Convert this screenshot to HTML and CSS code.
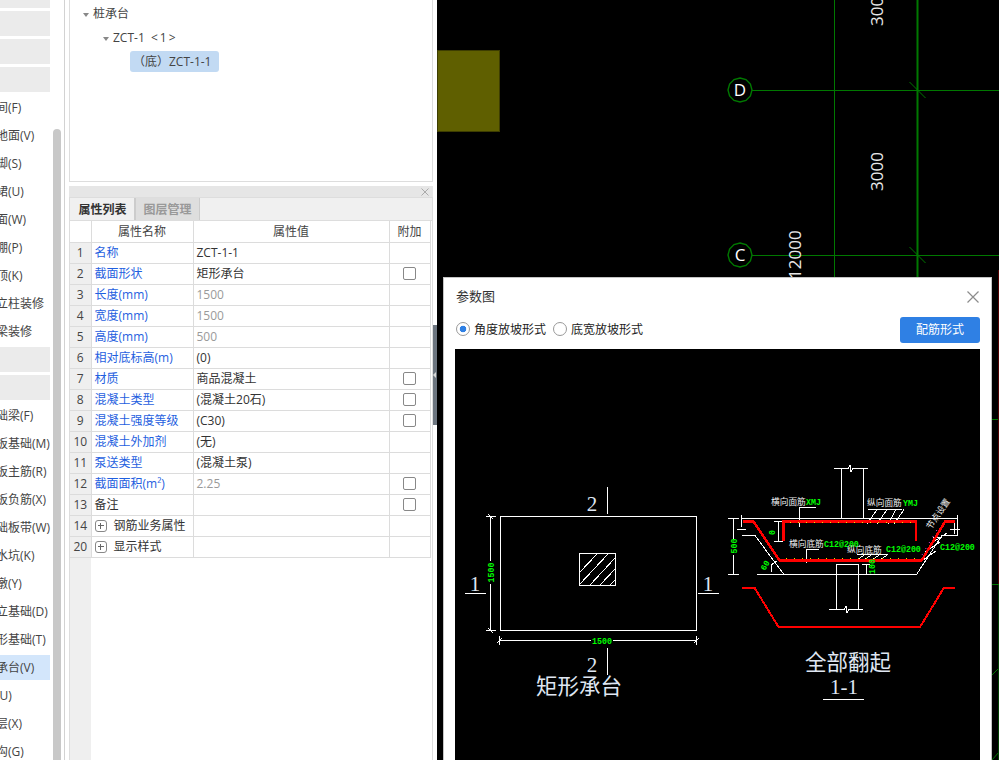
FILE: index.html
```html
<!DOCTYPE html>
<html lang="zh-CN">
<head>
<meta charset="utf-8">
<title>参数图</title>
<link rel="stylesheet" href="styles.css">
</head>
<body>
<div class="app">
  <aside class="sidebar">
    <ul class="nav">
      <li class="nav-head"></li><li class="nav-head"></li><li class="nav-head"></li><li class="nav-head"></li>
      <li class="nav-item"><span>房间(F)</span></li>
      <li class="nav-item"><span>楼地面(V)</span></li>
      <li class="nav-item"><span>踢脚(S)</span></li>
      <li class="nav-item"><span>墙裙(U)</span></li>
      <li class="nav-item"><span>墙面(W)</span></li>
      <li class="nav-item"><span>天棚(P)</span></li>
      <li class="nav-item"><span>吊顶(K)</span></li>
      <li class="nav-item"><span>独立柱装修</span></li>
      <li class="nav-item"><span>单梁装修</span></li>
      <li class="nav-head"></li><li class="nav-head"></li>
      <li class="nav-item"><span>基础梁(F)</span></li>
      <li class="nav-item"><span>筏板基础(M)</span></li>
      <li class="nav-item"><span>筏板主筋(R)</span></li>
      <li class="nav-item"><span>筏板负筋(X)</span></li>
      <li class="nav-item"><span>基础板带(W)</span></li>
      <li class="nav-item"><span>集水坑(K)</span></li>
      <li class="nav-item"><span>柱墩(Y)</span></li>
      <li class="nav-item"><span>独立基础(D)</span></li>
      <li class="nav-item"><span>条形基础(T)</span></li>
      <li class="nav-item nav-active"><span>桩承台(V)</span></li>
      <li class="nav-item"><span>桩(U)</span></li>
      <li class="nav-item"><span>垫层(X)</span></li>
      <li class="nav-item"><span>地沟(G)</span></li>
    </ul>
    <div class="scrollbar"></div>
  </aside>

  <main class="panels">
    <section class="tree">
      <div class="tree-row tree-l1"><i class="caret"></i>桩承台</div>
      <div class="tree-row tree-l2"><i class="caret"></i>ZCT-1&nbsp;&nbsp;&lt;&thinsp;1&thinsp;&gt;</div>
      <div class="tree-row tree-l3"><span class="tree-pill">（底）ZCT-1-1</span></div>
    </section>
    <section class="props">
      <div class="props-bar"><svg class="props-x" width="8" height="8" viewBox="0 0 8 8"><path d="M.5.5l7 7M7.5.5l-7 7"/></svg></div>
      <div class="tabs">
        <div class="tab tab-on">属性列表</div>
        <div class="tab">图层管理</div>
      </div>
      <div class="table-wrap">
        <table class="grid">
          <colgroup><col class="c-n"><col class="c-k"><col class="c-v"><col class="c-a"></colgroup>
          <thead><tr><th class="idx-head"></th><th>属性名称</th><th>属性值</th><th>附加</th></tr></thead>
          <tbody>
            <tr><td class="idx">1</td><td class="key">名称</td><td>ZCT-1-1</td><td></td></tr>
            <tr><td class="idx">2</td><td class="key">截面形状</td><td>矩形承台</td><td class="chk"><i></i></td></tr>
            <tr><td class="idx">3</td><td class="key">长度(mm)</td><td class="mut">1500</td><td></td></tr>
            <tr><td class="idx">4</td><td class="key">宽度(mm)</td><td class="mut">1500</td><td></td></tr>
            <tr><td class="idx">5</td><td class="key">高度(mm)</td><td class="mut">500</td><td></td></tr>
            <tr><td class="idx">6</td><td class="key">相对底标高(m)</td><td>(0)</td><td></td></tr>
            <tr><td class="idx">7</td><td class="key">材质</td><td>商品混凝土</td><td class="chk"><i></i></td></tr>
            <tr><td class="idx">8</td><td class="key">混凝土类型</td><td>(混凝土20石)</td><td class="chk"><i></i></td></tr>
            <tr><td class="idx">9</td><td class="key">混凝土强度等级</td><td>(C30)</td><td class="chk"><i></i></td></tr>
            <tr><td class="idx">10</td><td class="key">混凝土外加剂</td><td>(无)</td><td></td></tr>
            <tr><td class="idx">11</td><td class="key">泵送类型</td><td>(混凝土泵)</td><td></td></tr>
            <tr><td class="idx">12</td><td class="key">截面面积(m²)</td><td class="mut">2.25</td><td class="chk"><i></i></td></tr>
            <tr><td class="idx">13</td><td>备注</td><td></td><td class="chk"><i></i></td></tr>
            <tr><td class="idx">14</td><td><b class="plus"></b>钢筋业务属性</td><td></td><td></td></tr>
            <tr><td class="idx">20</td><td><b class="plus"></b>显示样式</td><td></td><td></td></tr>
          </tbody>
        </table>
      </div>
    </section>
  </main>

  <div class="splitter"><div class="split-handle"><i></i></div></div>

  <div class="canvas">
    <svg class="cad" width="562" height="760" viewBox="437 0 562 760">
      <rect class="cad-block" x="437.5" y="50.5" width="62" height="81"/>
      <path class="cad-g" d="M834.5 0V277M752 90.5H999M752 255.5H999"/>
      <path class="cad-g2" d="M917.5 0V277"/>
      <path class="cad-g" d="M909.5 82l16 16M909.500 247l16 16"/>
      <polygon class="cad-ring" transform="translate(740 90)" points="0,-12 6,-10.400 10.400,-6 12,0 10.400,6 6,10.400 0,12 -6,10.400 -10.400,6 -12,0 -10.400,-6 -6,-10.400"/>
      <polygon class="cad-ring" transform="translate(740 255)" points="0,-12 6,-10.400 10.400,-6 12,0 10.400,6 6,10.400 0,12 -6,10.400 -10.400,6 -12,0 -10.400,-6 -6,-10.400"/>
      <text class="cad-axis" x="740" y="96" text-anchor="middle">D</text>
      <text class="cad-axis" x="740" y="261" text-anchor="middle">C</text>
      <text class="cad-num" transform="translate(883 191) rotate(-90)">3000</text>
      <text class="cad-num" transform="translate(883 26) rotate(-90)">3000</text>
      <text class="cad-num" transform="translate(801 279) rotate(-90)">12000</text>
      <path class="cad-g" d="M992 419.500H999M992 584.500H999M992 675l7-7M992 760l7-8"/>
      <path class="cad-dr" d="M998.500 270V584"/>
      <path class="cad-dg" d="M998.500 585V760"/>
    </svg>

    <div class="dialog">
      <header class="dlg-head">
        <span class="dlg-title">参数图</span>
        <svg class="dlg-x" width="12" height="12" viewBox="0 0 12 12"><path d="M.5.5l11 11M11.500.5l-11 11"/></svg>
      </header>
      <div class="dlg-opts">
        <label class="radio radio-on"><i></i>角度放坡形式</label>
        <label class="radio"><i></i>底宽放坡形式</label>
        <button class="btn" type="button">配筋形式</button>
      </div>
      <div class="dlg-figure">
        <svg class="fig" width="525" height="411" viewBox="455 349 525 411">
          <!-- plan -->
          <path class="w" d="M500.500 516.500H696.500V630.500H500.500z"/>
          <path class="w" d="M579.500 553.500H615.500V585.500H579.500z"/>
          <path class="w1" d="M580 572l17-18M580 584l28-30M590 585l25-27M600 585l15-16M610 585l5-5"/>
          <path class="w" d="M607.500 487V514M607.500 648V675M465 593.500H486M698 593.500H719"/>
          <path class="w" d="M490.500 516V631M486 516.500H496M486 630.500H496M488 514l5 5M488 628l5 5"/>
          <path class="w" d="M499 640.500H697M499.500 636V645M696.500 636V645M497 643l5-5M694 643l5-5"/>
          <rect class="bg" x="486" y="561" width="9" height="23"/>
          <rect class="bg" x="591" y="636" width="22" height="9"/>
          <text class="gr" transform="translate(494 582.500) rotate(-90)">1500</text>
          <text class="gr" x="592" y="643.500">1500</text>
          <text class="sec" x="592" y="511" text-anchor="middle">2</text>
          <text class="sec" x="592" y="672" text-anchor="middle">2</text>
          <text class="sec" x="475" y="591" text-anchor="middle">1</text>
          <text class="sec" x="708" y="591" text-anchor="middle">1</text>
          <text class="cap" x="536" y="694">矩形承台</text>

          <!-- section 1-1 -->
          <path class="w" d="M834 468.500H848L850 465 851 472 853 468.500H868M841.500 469V518M863.500 469V518"/>
          <path class="w" d="M741.500 518.500H957.500M741.500 515V527M957.500 515V535"/>
          <path class="w" d="M741.500 535.500H755L783.500 574M757 574.500H916.500L942 535.500H957.500"/>
          <path class="w" d="M733.500 518V574.500M728 518.500H739M728 574.500H739"/>
          <path class="w" d="M737 529H746M950 529H960M954 522V534"/>
          <path class="w" d="M778.500 521V541M774 521.500H783M774 541.500H783"/>
          <path class="w" d="M836.500 609V564.500H858.500V609M829 609.500H844L846 606 847 613 849 609.500H863"/>
          <path class="w" d="M866.500 564V574M862 564.500H870"/>
          <path class="w" d="M799.500 527V507.500H815.500"/>
          <path class="w" d="M806.500 563V549.500H819"/>
          <path class="w" d="M868 509.500H902M877 509.500L867 524M887 509.500L877 524M896 509.500L888 524M904 509.500L894 524"/>
          <path class="w" d="M857 554.500H888M865 554.500L857 560M872 554.500L864 560M880 554.500L872 560M888 554.500L880 560"/>
          <path class="w" d="M933 542L947 533M925 552L940 542M923 560L936 551M933 537H942"/>
          <path class="w" d="M771 572V565L777 561"/>
          <path class="r" d="M742.500 521.700H753.500L779.500 560.700H921.500L945 521.700H955"/>
          <path class="r" d="M783.500 541V521.700H916V541"/>
          <path class="dots" d="M790 522.500H916M786 558.500H920"/>
          <path class="pink" d="M922 555l16-27"/>
          <rect class="bg" x="729" y="539" width="9" height="16"/>
          <text class="gr" transform="translate(736.500 553.500) rotate(-90)">500</text>
          <text class="gr" transform="translate(775 535) rotate(-90)">0</text>
          <text class="gr" transform="translate(765 571) rotate(-60)">60</text>
          <text class="gr" transform="translate(875 574) rotate(-90)">100</text>
          <text class="lab" x="771" y="505">横向面筋</text><text class="gr" x="806" y="505">XMJ</text>
          <text class="lab" x="867" y="506">纵向面筋</text><text class="gr" x="903" y="506">YMJ</text>
          <text class="lab" x="789" y="547">横向底筋</text><text class="gr" x="824" y="547">C12@200</text>
          <text class="lab" x="847" y="553">纵向底筋</text><text class="gr" x="886" y="552">C12@200</text>
          <text class="gr" x="940" y="550">C12@200</text>
          <text class="lab" transform="translate(931 530) rotate(-56)">节点设置</text>
          <path class="r r-thin" d="M742 587.700H754.500L778.500 627H920L944 587.700H955"/>
          <text class="cap" x="805" y="670">全部翻起</text>
          <text class="sec" x="844" y="694" text-anchor="middle">1-1</text>
          <path class="w" d="M823 699.500H864"/>
        </svg>
      </div>
    </div>
  </div>
</div>
</body>
</html>
```

FILE: styles.css
```css
* { box-sizing: border-box; }
html, body { margin: 0; height: 100%; background: #fff; overflow: hidden; }
body { font: 12px/1.2 "Open Sans", "Noto Sans CJK SC", "Liberation Sans", sans-serif; color: #333; }
.app { display: flex; width: 999px; height: 760px; overflow: hidden; }

/* sidebar */
.sidebar { flex: none; width: 65px; height: 760px; display: flex; border-right: 1px solid #d2d2d2; overflow: hidden; }
.nav { list-style: none; margin: -17px 0 0; padding: 0; width: 50px; flex: none; display: flex; flex-direction: column; gap: 3px; }
.nav-head, .nav-item { flex: none; height: 25px; }
.nav-head { background: #ebebeb; }
.nav-item { display: flex; align-items: center; white-space: nowrap; color: #444; }
.nav-item span { margin-left: -16px; padding-top: 2px; }
.nav-active { background: #d3e6fb; }
.scrollbar { flex: none; width: 8px; margin: 129px 0 0 3px; background: #c8c8c8; border-radius: 4px 4px 0 0; }

/* panels */
.panels { flex: none; width: 364px; margin-left: 4px; display: flex; flex-direction: column; gap: 4px; }
.tree { flex: none; height: 182px; border: 1px solid #ddd; border-top: 0; padding-top: 4px; }
.tree-row { display: flex; align-items: center; height: 21px; color: #444; white-space: nowrap; }
.tree-l1 { padding-left: 13px; }
.tree-l2 { margin-top: 3px; padding-left: 33px; }
.tree-l3 { margin-top: 2px; padding-left: 60px; }
.caret { width: 0; height: 0; margin-right: 4px; border: 3.5px solid transparent; border-top: 4px solid #888; border-bottom: 0; }
.tree-pill { display: block; width: 89px; height: 21px; line-height: 22px; background: #c2daf3; border-radius: 3px; padding-left: 3px; }

.props { flex: 1; min-height: 0; display: flex; flex-direction: column; }
.props-bar { flex: none; height: 12px; background: #e6e6e6; border-bottom: 1px solid #ddd; display: flex; justify-content: flex-end; align-items: center; padding-right: 4px; }
.props-x path { stroke: #aaa; fill: none; }
.tabs { flex: none; display: flex; height: 23px; background: #f0f0f0; padding-left: 1px; border-left: 1px solid #ddd; border-right: 1px solid #ddd; border-bottom: 1px solid #ddd; }
.tab { width: 65px; height: 22px; line-height: 24px; text-align: center; font-weight: 700; color: #999; background: #dedede; border: 1px solid #ccc; border-width: 0 1px; }
.tab-on { width: 64px; color: #333; background: #f0f0f0; border-left: 0; }
.table-wrap { flex: 1; min-height: 0; border-left: 1px solid #ddd; border-right: 1px solid #ddd; padding-right: 1px; background: linear-gradient(to right, #efefef 21px, #fff 21px); background-repeat: no-repeat; }
.grid { border-collapse: collapse; table-layout: fixed; width: 360px; background: #fff; }
.c-n { width: 21px; } .c-k { width: 102px; } .c-v { width: 196px; } .c-a { width: 41px; }
.grid th, .grid td { height: 21px; padding: 2px 3px 0; border: 1px solid #dcdcdc; border-width: 0 1px 1px 0; font-weight: 400; white-space: nowrap; color: #333; }
.grid th { text-align: center; height: 21px; padding-top: 1px; color: #444; }
.grid td.idx { background: #efefef; text-align: center; padding: 2px 0 0; color: #444; }
.grid td.key { color: #1f5fe0; }
.grid td.mut { color: #9a9a9a; }
.grid td.chk { text-align: center; padding: 0; }
.chk i { display: block; width: 13px; height: 13px; margin: 0 auto; border: 1px solid #888; border-radius: 2px; background: #fff; }
.plus { display: inline-block; position: relative; width: 12px; height: 12px; margin-right: 7px; vertical-align: -2px; border: 1px solid #888; border-radius: 3px; }
.plus::before, .plus::after { content: ""; position: absolute; background: #666; }
.plus::before { left: 2px; right: 2px; top: 4px; height: 1px; }
.plus::after { top: 2px; bottom: 2px; left: 4px; width: 1px; }

/* splitter */
.splitter { flex: none; width: 4px; padding-top: 325px; }
.split-handle { width: 4px; height: 100px; background: #6d7680; display: flex; align-items: center; }
.split-handle i { width: 0; height: 0; border: 3px solid transparent; border-left: 0; border-right: 3px solid #d8d8d8; }

/* canvas */
.canvas { flex: 1; min-width: 0; position: relative; background: #000; overflow: hidden; }
.cad { display: block; }
.cad-block { fill: #5f5f00; stroke: #3d3d00; }
.cad-g, .cad-g2, .cad-dr, .cad-dg, .cad-ring { fill: none; }
.cad-g { stroke: #007800; stroke-width: 1; }
.cad-g2 { stroke: #007800; stroke-width: 2; }
.cad-ring { stroke: #007800; stroke-width: 1.400; }
.cad-dr { stroke: #520000; }
.cad-dg { stroke: #004000; }
.cad-axis { font: 17px "Open Sans", sans-serif; fill: #fff; }
.cad-num { font: 17px "Open Sans", sans-serif; fill: #e8e8e8; }

/* dialog */
.dialog { position: absolute; left: 6px; top: 277px; width: 549px; height: 483px; background: #fff; border: 1px solid #c4c4c4; border-bottom: 0; padding: 0 11px; display: flex; flex-direction: column; }
.dlg-head { flex: none; height: 38px; display: flex; align-items: center; justify-content: space-between; padding: 0 1px; }
.dlg-title { font-size: 13px; color: #333; }
.dlg-x path { stroke: #8c8c8c; fill: none; stroke-width: 1.200; }
.dlg-opts { flex: none; height: 33px; display: flex; align-items: center; gap: 7px; padding: 0 0 5px 1px; }
.radio { display: flex; align-items: center; gap: 4px; color: #222; }
.radio i { width: 14px; height: 14px; margin-top: -2px; border: 1px solid #999; border-radius: 50%; background: #fff; }
.radio-on i { border-color: #999; background: radial-gradient(circle, #2f80e4 0 3px, #fff 3.600px); }
.btn { margin-left: auto; width: 80px; height: 26px; border: 0; border-radius: 3px; background: #2f80e4; color: #fff; font: inherit; padding: 0; }
.dlg-figure { flex: 1; min-height: 0; background: #000; }
.fig { display: block; }

.w { fill: none; stroke: #fff; stroke-width: 1; shape-rendering: crispEdges; }
.w1 { fill: none; stroke: #fff; stroke-width: 1; shape-rendering: crispEdges; }
.r { fill: none; stroke: #f00; stroke-width: 2.500; shape-rendering: crispEdges; }
.r-thin { stroke-width: 2; }
.dots { fill: none; stroke: #e8e800; stroke-width: 1; stroke-dasharray: 1 7; shape-rendering: crispEdges; }
.pink { fill: none; stroke: #e040e0; stroke-width: 1; stroke-dasharray: 1 6; }
.bg { fill: #000; }
.gr { font: 700 8.300px "Liberation Mono", monospace; fill: #0f0; }
.lab { font: 8.700px "Noto Sans CJK SC", sans-serif; fill: #eee; }
.sec { font: 21px "Liberation Serif", serif; fill: #dfe6f2; }
.cap { font: 21.500px "Noto Sans CJK SC", sans-serif; fill: #dfe6f2; }
```
